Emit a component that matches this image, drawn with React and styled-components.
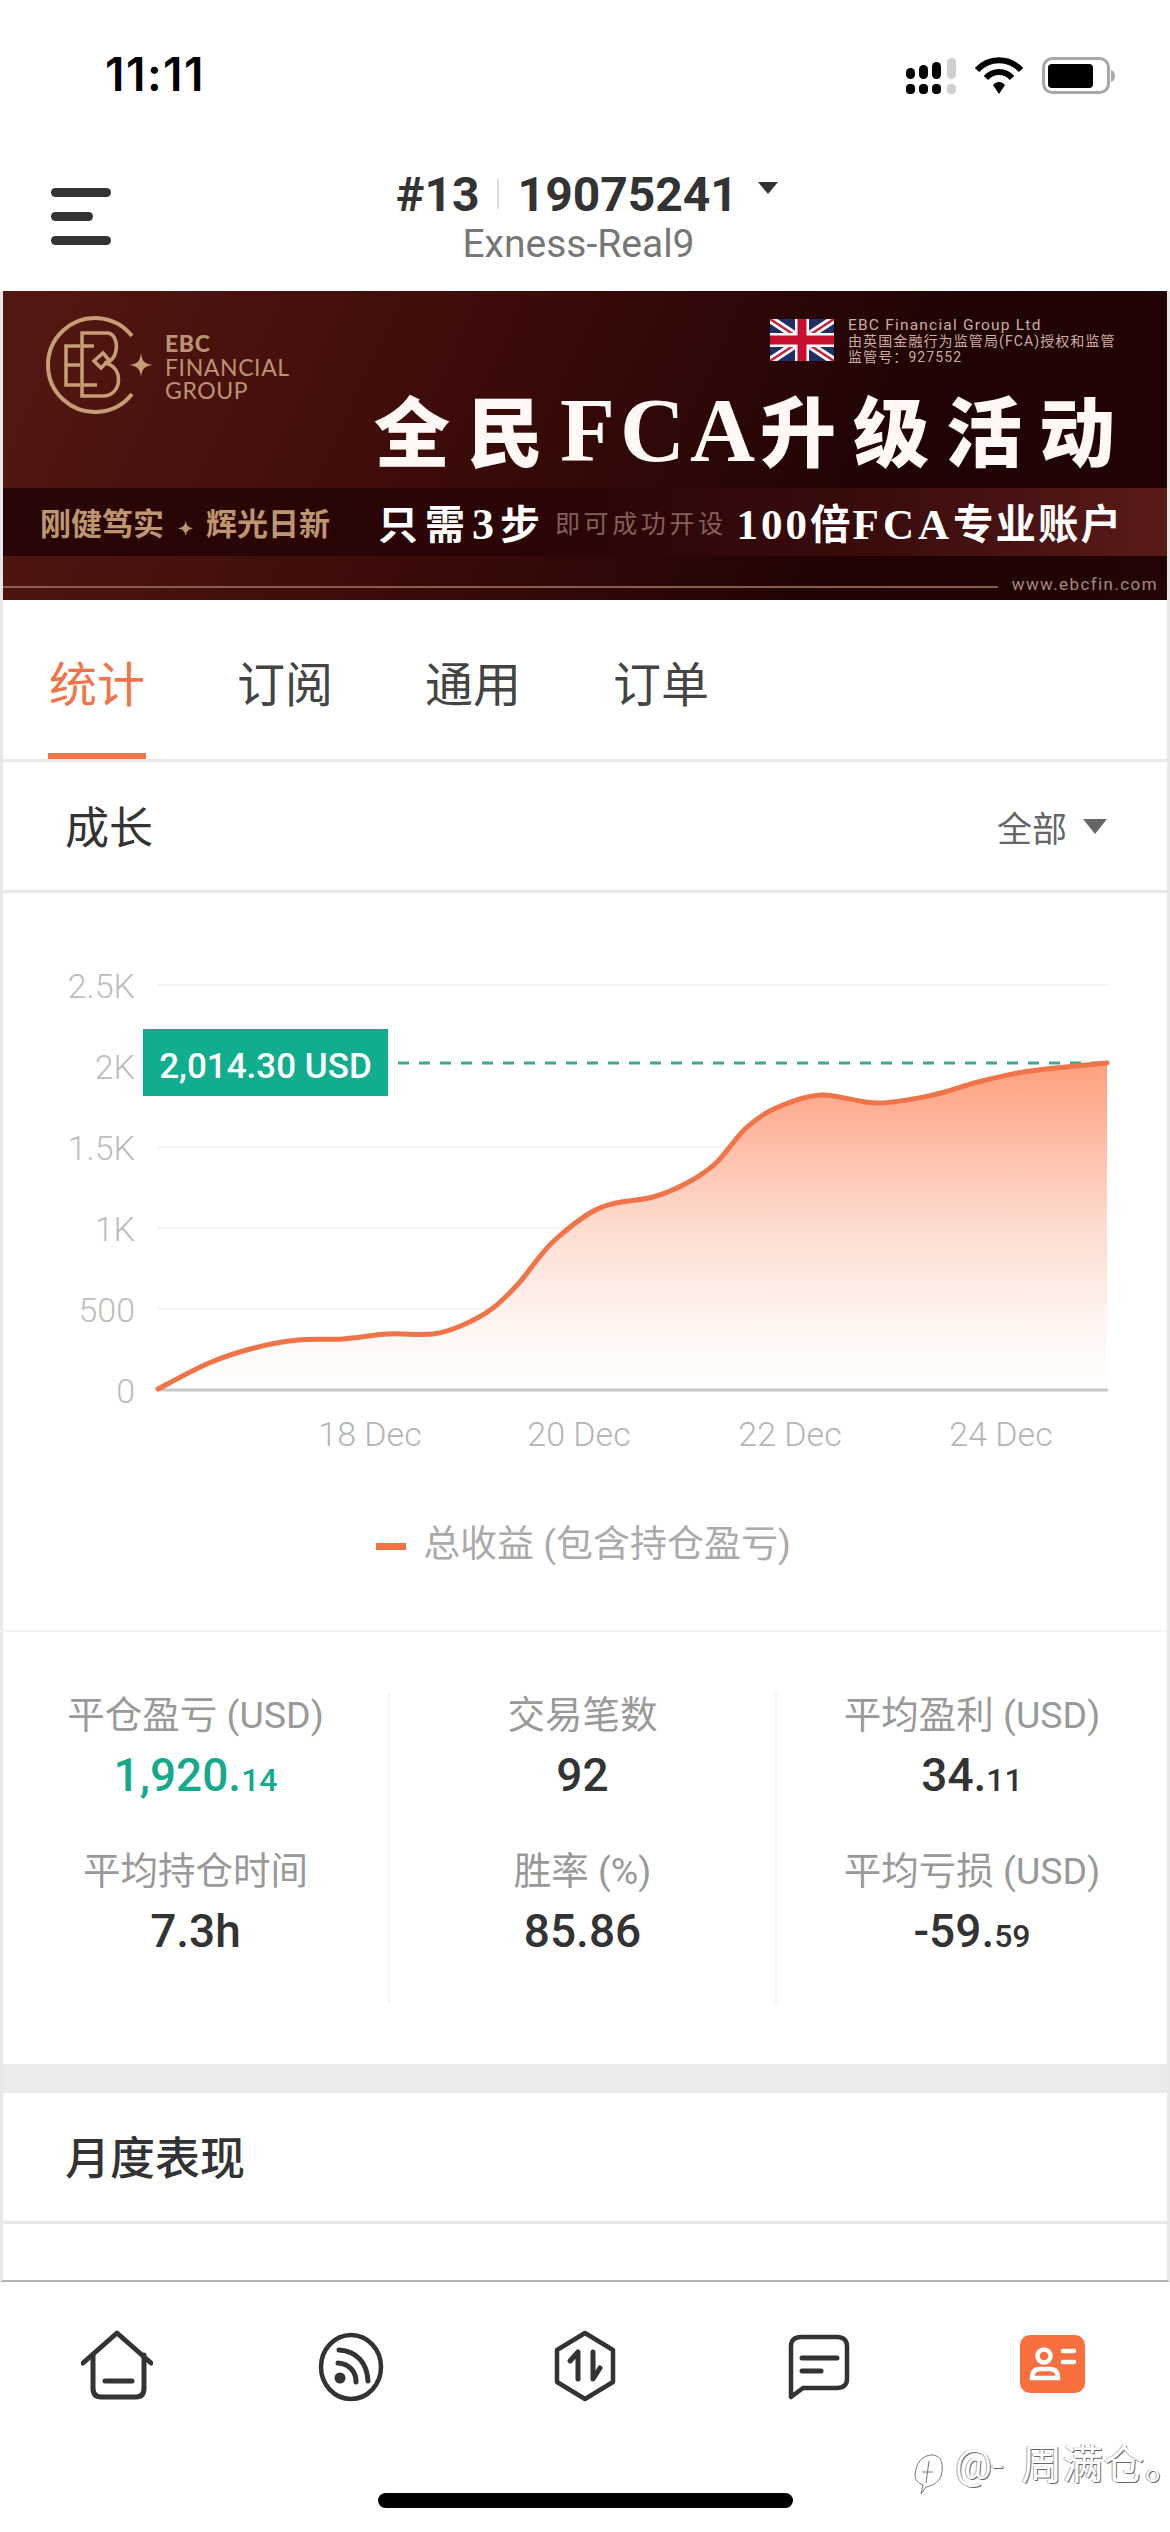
import React from "react";
import styled, { createGlobalStyle } from "styled-components";

const cjk = `"Roboto", "Noto Sans CJK SC", sans-serif`;
const orange = "#ef7448";

const GlobalStyle = createGlobalStyle`
  html, body {
    margin: 0;
    padding: 0;
    background: #fff;
  }
  * {
    box-sizing: border-box;
  }
`;

const Page = styled.div`
  position: relative;
  width: 1170px;
  height: 2532px;
  overflow: hidden;
  background: #fff;
  font-family: ${cjk};
  display: flex;
  flex-direction: column;
`;

/* status bar */
const StatusBar = styled.div`
  height: 110px;
  padding: 44px 54px 0 105px;
  display: flex;
  justify-content: space-between;
  align-items: flex-start;
`;

const Clock = styled.span`
  font-family: "Inter", sans-serif;
  font-weight: 600;
  font-size: 46px;
  line-height: 60px;
  letter-spacing: 1.5px;
  color: #000;
`;

const StatusIcons = styled.div`
  display: flex;
  align-items: center;
  gap: 18px;
  padding-top: 13px;
`;

/* account header */
const Header = styled.div`
  height: 181px;
  position: relative;
  display: flex;
  flex-direction: column;
  align-items: center;
  padding-top: 58px;
  padding-right: 10px;
`;

const MenuButton = styled.div`
  position: absolute;
  left: 51px;
  top: 78px;
  display: flex;
  flex-direction: column;
  align-items: flex-start;
  gap: 15px;
`;

const MenuBar = styled.span`
  display: block;
  height: 9px;
  width: ${(p) => p.$w}px;
  border-radius: 5px;
  background: #333;
`;

const AccountRow = styled.div`
  display: flex;
  align-items: center;
  height: 52px;
  margin-left: 14px;
  color: #333;
  font-size: 48px;
  font-weight: 700;
`;

const AccountSep = styled.span`
  width: 2px;
  height: 30px;
  margin: 0 19px 0 17px;
  background: #ddd;
`;

const Caret = styled.span`
  width: 0;
  height: 0;
  border-left: ${(p) => p.$w}px solid transparent;
  border-right: ${(p) => p.$w}px solid transparent;
  border-top: ${(p) => p.$h}px solid ${(p) => p.$c};
`;

const AccountCaret = styled(Caret)`
  margin: 0 0 12px 20px;
`;

const ServerName = styled.div`
  margin-top: 3px;
  margin-left: -3px;
  font-size: 39px;
  line-height: 42px;
  color: #777;
`;

/* everything between header and tab bar has a grey hairline on both sides */
const Frame = styled.div`
  height: 1991px;
  border-left: 3px solid #e8e8e8;
  border-right: 3px solid #e8e8e8;
  border-bottom: 2px solid #b5b5b5;
  display: flex;
  flex-direction: column;
`;

/* banner */
const Banner = styled.div`
  height: 309px;
  display: flex;
  flex-direction: column;
  background: linear-gradient(115deg, #541812 0%, #3c0b09 40%, #1f0303 75%, #240405 100%);
`;

const BannerTop = styled.div`
  height: 199px;
  display: flex;
  justify-content: space-between;
  padding: 24px 52px 0 38px;
`;

const LogoBlock = styled.div`
  display: flex;
  align-items: flex-start;
  gap: 2px;
`;

const LogoText = styled.div`
  margin-top: 17px;
  font-family: "Lato", sans-serif;
  font-size: 23px;
  line-height: 23.5px;
  letter-spacing: 0.6px;
  color: #bb9372;
`;

const LogoBold = styled.div`
  font-weight: 900;
`;

const BannerRight = styled.div`
  display: flex;
  flex-direction: column;
  align-items: flex-end;
`;

const FlagRow = styled.div`
  display: flex;
  align-items: flex-start;
  gap: 14px;
  width: 345px;
  margin-top: 4px;
`;

const FlagText = styled.div`
  margin-top: -2px;
  white-space: nowrap;
  color: #cdaca3;
`;

const FlagLine = styled.div`
  font-size: ${(p) => p.$size}px;
  line-height: 16px;
  letter-spacing: ${(p) => p.$ls}px;
`;

const BannerTitle = styled.div`
  margin-top: 18px;
  font-size: 76px;
  line-height: 90px;
  font-weight: 900;
  letter-spacing: 17px;
  margin-right: -17px;
  color: #fff8f4;
  white-space: nowrap;
  font-family: "Noto Sans CJK SC", sans-serif;
`;

const SerifWord = styled.span`
  font-family: "Liberation Serif", serif;
  font-weight: 700;
  font-size: ${(p) => p.$size}px;
  letter-spacing: ${(p) => p.$ls}px;
`;

const SloganStrip = styled.div`
  height: 69px;
  display: flex;
  align-items: center;
  padding: 0 0 0 37px;
  background: linear-gradient(90deg, #280506 0%, #2b0505 50%, #3a0c0c 75%, #5a1a1a 100%);
  white-space: nowrap;
`;

const Motto = styled.div`
  width: 338px;
  font-size: 31px;
  font-weight: 700;
  color: #bd966f;
  font-family: "Noto Sans CJK SC", sans-serif;
`;

const MottoStar = styled.span`
  font-size: 18px;
  margin: 0 13px 0 14px;
`;

const StepsBig = styled.span`
  font-size: 40px;
  font-weight: 700;
  color: #fff;
  letter-spacing: 7px;
  font-family: "Noto Sans CJK SC", sans-serif;
`;

const StepsSmall = styled.span`
  margin: 0 10px 0 8px;
  font-size: 25px;
  letter-spacing: 3.6px;
  color: #85605a;
  font-family: "Noto Sans CJK SC", sans-serif;
`;

const StepsEnd = styled.span`
  font-size: 40.5px;
  font-weight: 700;
  color: #fff;
  letter-spacing: 2px;
  font-family: "Noto Sans CJK SC", sans-serif;
`;

const BannerFoot = styled.div`
  flex: 1;
  display: flex;
  align-items: center;
  gap: 14px;
  padding: 18px 9px 0 0;
`;

const FootLine = styled.span`
  flex: 1;
  height: 2px;
  background: #8c5d4e;
`;

const FootUrl = styled.span`
  margin-bottom: 6px;
  font-size: 17px;
  letter-spacing: 1.4px;
  color: #a58a80;
`;

/* tabs */
const Tabs = styled.div`
  height: 162px;
  flex-shrink: 0;
  display: flex;
  gap: 90px;
  padding-left: 45px;
  border-bottom: 3px solid #e8e8e8;
`;

const Tab = styled.div`
  width: 98px;
  height: 159px;
  padding-top: 55px;
  text-align: center;
  font-size: 48px;
  line-height: 62px;
  color: ${(p) => (p.$active ? orange : "#444")};
  border-bottom: 6px solid ${(p) => (p.$active ? orange : "transparent")};
`;

/* section header */
const SectionHead = styled.div`
  height: 131px;
  flex-shrink: 0;
  display: flex;
  align-items: center;
  justify-content: space-between;
  padding: 0 60px 0 ${(p) => p.$pl}px;
  border-bottom: 3px solid #e8e8e8;
`;

const SectionTitle = styled.div`
  padding-top: 5px;
  font-size: ${(p) => p.$size || 44}px;
  line-height: 60px;
  color: #333;
  font-weight: ${(p) => p.$weight || 400};
`;

const RangePicker = styled.div`
  display: flex;
  align-items: center;
  gap: 16px;
  font-size: 35px;
  color: #666;
`;

/* chart */
const ChartBox = styled.div`
  position: relative;
  height: 577px;
  flex-shrink: 0;
`;

const ChartSvg = styled.svg`
  display: block;
  font-family: "Roboto", sans-serif;
`;

const ValueTag = styled.div`
  position: absolute;
  left: 140px;
  top: 136px;
  width: 245px;
  height: 67px;
  display: flex;
  align-items: center;
  justify-content: center;
  padding-top: 8px;
  background: #10ad8e;
  color: #fff;
  font-size: 35px;
  font-weight: 500;
`;

const Legend = styled.div`
  height: 162px;
  flex-shrink: 0;
  display: flex;
  align-items: flex-start;
  justify-content: center;
  gap: 17px;
  padding: 53px 0 0 0;
  margin-left: -3px;
  font-size: 37px;
  line-height: 44px;
  color: #aaa;
  border-bottom: 2px solid #f3f3f3;
`;

const LegendDash = styled.span`
  width: 30px;
  height: 7px;
  margin-top: 20px;
  background: ${orange};
`;

/* stats */
const StatsGrid = styled.div`
  height: 432px;
  flex-shrink: 0;
  padding-top: 60px;
  display: grid;
  grid-template-columns: 387px 387px 1fr;
  align-content: start;
`;

const StatCell = styled.div`
  height: ${(p) => p.$h}px;
  display: flex;
  flex-direction: column;
  align-items: center;
  padding-top: ${(p) => p.$pt}px;
  border-right: ${(p) => (p.$last ? "none" : "2px solid #f5f5f5")};
`;

const StatLabel = styled.div`
  font-size: 37.5px;
  line-height: 44px;
  color: #999;
`;

const StatValue = styled.div`
  margin-top: 11px;
  font-size: 46px;
  line-height: 54px;
  font-weight: 500;
  color: ${(p) => p.$c || "#333"};
`;

const StatCents = styled.span`
  font-size: 32px;
`;

const GreyBand = styled.div`
  height: 29px;
  flex-shrink: 0;
  background: #ebebeb;
`;

/* tab bar */
const BottomNav = styled.div`
  display: grid;
  grid-template-columns: repeat(5, 234px);
  height: 100px;
  padding-top: 47px;
`;

const NavItem = styled.div`
  display: flex;
  justify-content: center;
  padding-top: ${(p) => p.$pt}px;
`;

const HomeIndicator = styled.div`
  position: absolute;
  left: 378px;
  top: 2493px;
  width: 415px;
  height: 15px;
  border-radius: 8px;
  background: #000;
`;

const Watermark = styled.div`
  position: absolute;
  left: 913px;
  top: 2438px;
  display: flex;
  align-items: flex-start;
  gap: 8px;
  font-size: 41px;
  line-height: 54px;
  word-spacing: 8px;
  color: #fff;
  text-shadow: 1px 1px 0 #666, -1px 0 0 #aaa;
  white-space: nowrap;
`;

const WatermarkStop = styled.span`
  font-feature-settings: "palt";
`;

// chart data, in page coordinates
const curve = [
  [158, 1389], [209, 1363], [254, 1348], [298, 1340], [343, 1339], [388, 1334], [433, 1334],
  [463, 1325], [493, 1308], [519, 1283], [537, 1260], [556, 1239], [590, 1213], [616, 1203],
  [653, 1197], [687, 1183], [716, 1163], [746, 1128], [776, 1108], [821, 1095], [877, 1103],
  [933, 1095], [978, 1082], [1030, 1071], [1107, 1063],
];

function smoothPath(pts) {
  let d = `M${pts[0][0]} ${pts[0][1]}`;
  for (let i = 0; i < pts.length - 1; i++) {
    const p0 = pts[i - 1] || pts[i];
    const p1 = pts[i];
    const p2 = pts[i + 1];
    const p3 = pts[i + 2] || p2;
    const c1x = p1[0] + (p2[0] - p0[0]) / 6;
    const c1y = p1[1] + (p2[1] - p0[1]) / 6;
    const c2x = p2[0] - (p3[0] - p1[0]) / 6;
    const c2y = p2[1] - (p3[1] - p1[1]) / 6;
    d += ` C${c1x} ${c1y} ${c2x} ${c2y} ${p2[0]} ${p2[1]}`;
  }
  return d;
}

const linePath = smoothPath(curve);
const yTicks = [
  ["2.5K", 985], ["2K", 1066], ["1.5K", 1147], ["1K", 1228], ["500", 1309], ["0", 1390],
];
const xTicks = [["18 Dec", 370], ["20 Dec", 579], ["22 Dec", 790], ["24 Dec", 1001]];

function GrowthChart() {
  return (
    <ChartSvg width="1164" height="577" viewBox="3 893 1164 577">
      <defs>
        <linearGradient id="areaFill" x1="0" y1="0" x2="0" y2="1">
          <stop offset="0" stopColor="#ff9f7e" />
          <stop offset="0.5" stopColor="#fddccf" />
          <stop offset="0.8" stopColor="#fff5f1" />
          <stop offset="1" stopColor="#ffffff" />
        </linearGradient>
      </defs>
      {yTicks.map(([label, y]) => (
        <g key={label}>
          {y !== 1390 && y !== 1066 && <line x1="158" x2="1107" y1={y} y2={y} stroke="#f4f4f4" strokeWidth="2" />}
          <text x="135" y={y + 13} textAnchor="end" fontSize="34" fontWeight="300" fill="#bdbdbd">{label}</text>
        </g>
      ))}
      <path d={`${linePath} L1107 1390 L158 1390 Z`} fill="url(#areaFill)" />
      <line x1="158" x2="1108" y1="1390" y2="1390" stroke="#c8c8c8" strokeWidth="3" />
      <line x1="398" x2="1107" y1="1063" y2="1063" stroke="#3fa88f" strokeWidth="3" strokeDasharray="11 10" />
      <path d={linePath} fill="none" stroke={orange} strokeWidth="5" strokeLinecap="round" />
      {xTicks.map(([label, x]) => (
        <text key={label} x={x} y="1446" textAnchor="middle" fontSize="34" fontWeight="300" fill="#b5b5b5">{label}</text>
      ))}
    </ChartSvg>
  );
}

function SignalIcon() {
  const xs = [0, 13, 26, 41];
  const tops = [11, 8, 5, 1];
  return (
    <svg width="50" height="38" viewBox="0 0 50 38">
      {xs.map((x, i) => (
        <g key={x} fill={i === 3 ? "#cfcfcf" : "#000"}>
          <rect x={x} y={tops[i]} width="9" height={22 - tops[i]} rx="4.5" />
          <rect x={x} y="27" width="9" height="10" rx="4" />
        </g>
      ))}
    </svg>
  );
}

function WifiIcon() {
  return (
    <svg width="50" height="38" viewBox="0 0 50 38">
      <path d="M3 13 C15 0 35 0 47 13" fill="none" stroke="#000" strokeWidth="6" />
      <path d="M12 21 C19 13 31 13 38 21" fill="none" stroke="#000" strokeWidth="6" />
      <path d="M19 28 C22 24 28 24 31 28 L25 37 Z" fill="#000" />
    </svg>
  );
}

function BatteryIcon() {
  return (
    <svg width="74" height="38" viewBox="0 0 74 38">
      <rect x="1.5" y="1.5" width="65" height="34" rx="9" fill="none" stroke="#a8a8a8" strokeWidth="3" />
      <rect x="6" y="7" width="45" height="24" rx="4" fill="#000" />
      <path d="M69 13 C72 14 73 16 73 19 C73 22 72 24 69 25 Z" fill="#a8a8a8" />
    </svg>
  );
}

function EbcMark() {
  return (
    <svg width="122" height="104" viewBox="0 0 122 104" fill="none" stroke="#c79d76" strokeWidth="3.5">
      <path d="M91 21 A47 47 0 1 0 91 79" strokeWidth="4" />
      <path d="M39 31 H25 V70 H39 M25 50 H39" />
      <path d="M41 70 V18 H66 C79 18 79 47 63 48 C83 50 82 81 62 81 H41 V70 H56 M41 31 H53" />
      <path d="M53 46 L62 38 L68 45 L60 53 Z" />
      <path d="M100 38 C101 46 103 49 112 50 C103 51 101 54 100 62 C99 54 97 51 88 50 C97 49 99 46 100 38 Z" fill="#c79d76" stroke="none" />
    </svg>
  );
}

function UkFlag() {
  return (
    <svg width="64" height="42" viewBox="0 0 64 42" style={{ flexShrink: 0 }}>
      <rect width="64" height="42" fill="#1f2f66" />
      <path d="M0 0 L64 42 M64 0 L0 42" stroke="#fff" strokeWidth="8" />
      <path d="M0 0 L64 42 M64 0 L0 42" stroke="#c8243c" strokeWidth="2.5" />
      <path d="M32 0 V42 M0 21 H64" stroke="#fff" strokeWidth="14" />
      <path d="M32 0 V42 M0 21 H64" stroke="#c8102e" strokeWidth="9" />
    </svg>
  );
}

const navStroke = { fill: "none", stroke: "#333", strokeWidth: 5, strokeLinecap: "round", strokeLinejoin: "round" };

function HomeIcon() {
  return (
    <svg width="72" height="72" viewBox="0 0 72 72" {...navStroke}>
      <path d="M2 33 L36 3 L70 33" />
      <path d="M12 25 V58 C12 64 15 67 20 67 H55 C60 67 63 64 63 58 V25" />
      <path d="M24 51 H51" />
    </svg>
  );
}

function FeedIcon() {
  return (
    <svg width="68" height="72" viewBox="0 0 68 72" {...navStroke}>
      <ellipse cx="34" cy="36" rx="30" ry="32" strokeWidth="4.5" />
      <circle cx="23" cy="47" r="5.5" fill="#333" stroke="none" />
      <path d="M21 32 C32 33 39 40 39 51" />
      <path d="M22 19 C40 20 50 32 51 50" />
    </svg>
  );
}

function SwapIcon() {
  return (
    <svg width="64" height="72" viewBox="0 0 64 72" {...navStroke}>
      <path d="M32 3 L60 20 V52 L32 69 L4 52 V20 Z" strokeWidth="4.5" />
      <path d="M17 31 L25 22 V49" />
      <path d="M40 22 V49 L47 38" />
    </svg>
  );
}

function ChatIcon() {
  return (
    <svg width="62" height="66" viewBox="0 0 62 66" {...navStroke}>
      <path d="M13 3 H49 C55 3 59 6 59 12 V45 C59 51 55 54 49 54 H15 L3 63 V12 C3 6 7 3 13 3 Z" strokeWidth="4.5" />
      <path d="M14 24 H49" />
      <path d="M14 37 H33" />
    </svg>
  );
}

function ProfileIcon() {
  return (
    <svg width="66" height="60" viewBox="0 0 66 60">
      <rect width="65" height="58" rx="10" fill="#f66f3d" />
      <g fill="none" stroke="#fff" strokeWidth="4.5" strokeLinecap="round">
        <circle cx="24" cy="21" r="6.5" />
        <path d="M12 43 C12 37 15 34 20 34 H30 C35 34 38 37 38 43 Z" />
        <path d="M43 16 H54 M43 27 H54" />
      </g>
    </svg>
  );
}

function WatermarkLogo() {
  return (
    <svg width="34" height="42" viewBox="0 0 34 42" fill="none" stroke="#777" strokeWidth="1" style={{ marginTop: 15 }}>
      <path d="M2 22 C3 9 10 2 19 2 C29 2 31 12 28 23 C25 30 19 33 13 34 L8 41 L10 32 C5 30 2 27 2 22 Z" />
      <path d="M9 19 H20 M16 8 L13 30" />
    </svg>
  );
}

const stats = [
  { label: "平仓盈亏 (USD)", value: "1,920.", cents: "14", color: "#16a98b" },
  { label: "交易笔数", value: "92" },
  { label: "平均盈利 (USD)", value: "34.", cents: "11" },
  { label: "平均持仓时间", value: "7.3h" },
  { label: "胜率 (%)", value: "85.86" },
  { label: "平均亏损 (USD)", value: "-59.", cents: "59" },
];

export default function App() {
  return (
    <Page>
      <GlobalStyle />
      <StatusBar>
        <Clock>11:11</Clock>
        <StatusIcons>
          <SignalIcon />
          <WifiIcon />
          <BatteryIcon />
        </StatusIcons>
      </StatusBar>

      <Header>
        <MenuButton>
          <MenuBar $w={60} />
          <MenuBar $w={42} />
          <MenuBar $w={60} />
        </MenuButton>
        <AccountRow>
          #13
          <AccountSep />
          19075241
          <AccountCaret $w={10} $h={12} $c="#333" />
        </AccountRow>
        <ServerName>Exness-Real9</ServerName>
      </Header>

      <Frame>
        <Banner>
          <BannerTop>
            <LogoBlock>
              <EbcMark />
              <LogoText>
                <LogoBold>EBC</LogoBold>
                FINANCIAL
                <br />
                GROUP
              </LogoText>
            </LogoBlock>
            <BannerRight>
              <FlagRow>
                <UkFlag />
                <FlagText>
                  <FlagLine $size={15.5} $ls={1.2}>EBC Financial Group Ltd</FlagLine>
                  <FlagLine $size={14} $ls={1.1}>由英国金融行为监管局(FCA)授权和监管</FlagLine>
                  <FlagLine $size={14} $ls={1.1}>监管号：927552</FlagLine>
                </FlagText>
              </FlagRow>
              <BannerTitle>
                全民<SerifWord $size={90} $ls={5}>FCA</SerifWord>升级活动
              </BannerTitle>
            </BannerRight>
          </BannerTop>
          <SloganStrip>
            <Motto>
              刚健笃实<MottoStar>✦</MottoStar>辉光日新
            </Motto>
            <StepsBig>
              只需<SerifWord $size={44} $ls={6}>3</SerifWord>步
            </StepsBig>
            <StepsSmall>即可成功开设</StepsSmall>
            <StepsEnd>
              <SerifWord $size={43} $ls={3}>100</SerifWord>倍<SerifWord $size={43} $ls={4}>FCA</SerifWord>专业账户
            </StepsEnd>
          </SloganStrip>
          <BannerFoot>
            <FootLine />
            <FootUrl>www.ebcfin.com</FootUrl>
          </BannerFoot>
        </Banner>

        <Tabs>
          <Tab $active>统计</Tab>
          <Tab>订阅</Tab>
          <Tab>通用</Tab>
          <Tab>订单</Tab>
        </Tabs>

        <SectionHead $pl={62}>
          <SectionTitle>成长</SectionTitle>
          <RangePicker>
            全部
            <Caret $w={12} $h={15} $c="#666" />
          </RangePicker>
        </SectionHead>

        <ChartBox>
          <GrowthChart />
          <ValueTag>2,014.30 USD</ValueTag>
        </ChartBox>
        <Legend>
          <LegendDash />
          总收益 (包含持仓盈亏)
        </Legend>

        <StatsGrid>
          {stats.map((s, i) => (
            <StatCell key={s.label} $last={i % 3 === 2} $h={i < 3 ? 152 : 160} $pt={i < 3 ? 1 : 5}>
              <StatLabel>{s.label}</StatLabel>
              <StatValue $c={s.color}>
                {s.value}
                {s.cents && <StatCents>{s.cents}</StatCents>}
              </StatValue>
            </StatCell>
          ))}
        </StatsGrid>

        <GreyBand />
        <SectionHead $pl={62}>
          <SectionTitle $weight={500} $size={45}>月度表现</SectionTitle>
        </SectionHead>
      </Frame>

      <BottomNav>
        <NavItem $pt={1}><HomeIcon /></NavItem>
        <NavItem $pt={2}><FeedIcon /></NavItem>
        <NavItem $pt={1}><SwapIcon /></NavItem>
        <NavItem $pt={5}><ChatIcon /></NavItem>
        <NavItem $pt={6}><ProfileIcon /></NavItem>
      </BottomNav>

      <Watermark>
        <WatermarkLogo />
        <span>
          @- 周满仓<WatermarkStop>。</WatermarkStop>
        </span>
      </Watermark>
      <HomeIndicator />
    </Page>
  );
}
